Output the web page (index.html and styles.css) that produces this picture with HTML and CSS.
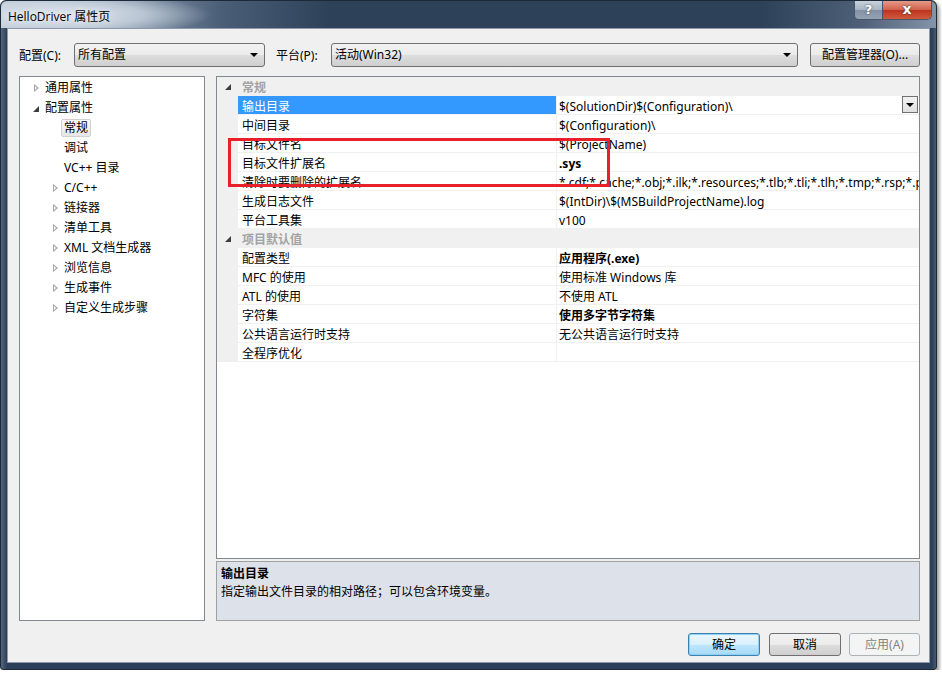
FILE: index.html
```html
<!DOCTYPE html>
<html lang="zh-CN">
<head>
    <meta charset="UTF-8">
    <title>HelloDriver 属性页</title>
    <link rel="stylesheet" href="styles.css">
</head>
<body>
    <div class="window">
        <!-- Barra de título -->
        <div class="titlebar">
            <span class="title">HelloDriver 属性页</span>
            <div class="caption-buttons">
                <div class="cap-btn help">?</div>
                <div class="cap-btn close">x</div>
            </div>
        </div>

        <div class="client">
            <!-- Configuración / plataforma -->
            <div class="toolbar">
                <label class="tb-label">配置(C):</label>
                <div class="combo combo-config">所有配置<span class="arrow"></span></div>
                <label class="tb-label">平台(P):</label>
                <div class="combo combo-platform">活动(Win32)<span class="arrow"></span></div>
                <div class="btn btn-manager">配置管理器(O)...</div>
            </div>

            <div class="main">
                <!-- Árbol de propiedades -->
                <ul class="tree">
                    <li class="lvl1"><span class="tw closed"></span>通用属性</li>
                    <li class="lvl1"><span class="tw open"></span>配置属性</li>
                    <li class="lvl2"><span class="tw none"></span><span class="sel">常规</span></li>
                    <li class="lvl2"><span class="tw none"></span>调试</li>
                    <li class="lvl2"><span class="tw none"></span>VC++ 目录</li>
                    <li class="lvl2"><span class="tw closed"></span>C/C++</li>
                    <li class="lvl2"><span class="tw closed"></span>链接器</li>
                    <li class="lvl2"><span class="tw closed"></span>清单工具</li>
                    <li class="lvl2"><span class="tw closed"></span>XML 文档生成器</li>
                    <li class="lvl2"><span class="tw closed"></span>浏览信息</li>
                    <li class="lvl2"><span class="tw closed"></span>生成事件</li>
                    <li class="lvl2"><span class="tw closed"></span>自定义生成步骤</li>
                </ul>

                <div class="right">
                    <!-- Rejilla de propiedades -->
                    <div class="grid">
                        <div class="cat"><span class="margin"><span class="tw open"></span></span><span class="cat-name">常规</span></div>
                        <div class="row selected"><span class="margin"></span><span class="name">输出目录</span><span class="value">$(SolutionDir)$(Configuration)\<span class="drop"><span class="arrow"></span></span></span></div>
                        <div class="row"><span class="margin"></span><span class="name">中间目录</span><span class="value">$(Configuration)\</span></div>
                        <div class="row"><span class="margin"></span><span class="name">目标文件名</span><span class="value">$(ProjectName)</span></div>
                        <div class="row"><span class="margin"></span><span class="name">目标文件扩展名</span><span class="value bold">.sys</span></div>
                        <div class="row"><span class="margin"></span><span class="name">清除时要删除的扩展名</span><span class="value">*.cdf;*.cache;*.obj;*.ilk;*.resources;*.tlb;*.tli;*.tlh;*.tmp;*.rsp;*.pgc</span></div>
                        <div class="row"><span class="margin"></span><span class="name">生成日志文件</span><span class="value">$(IntDir)\$(MSBuildProjectName).log</span></div>
                        <div class="row"><span class="margin"></span><span class="name">平台工具集</span><span class="value">v100</span></div>
                        <div class="cat"><span class="margin"><span class="tw open"></span></span><span class="cat-name">项目默认值</span></div>
                        <div class="row"><span class="margin"></span><span class="name">配置类型</span><span class="value bold">应用程序(.exe)</span></div>
                        <div class="row"><span class="margin"></span><span class="name">MFC 的使用</span><span class="value">使用标准 Windows 库</span></div>
                        <div class="row"><span class="margin"></span><span class="name">ATL 的使用</span><span class="value">不使用 ATL</span></div>
                        <div class="row"><span class="margin"></span><span class="name">字符集</span><span class="value bold">使用多字节字符集</span></div>
                        <div class="row"><span class="margin"></span><span class="name">公共语言运行时支持</span><span class="value">无公共语言运行时支持</span></div>
                        <div class="row"><span class="margin"></span><span class="name">全程序优化</span><span class="value"></span></div>

                        <!-- Marca roja de la captura -->
                        <div class="highlight"></div>
                    </div>

                    <!-- Descripción -->
                    <div class="desc">
                        <div class="desc-title">输出目录</div>
                        <div class="desc-text">指定输出文件目录的相对路径；可以包含环境变量。</div>
                    </div>
                </div>
            </div>

            <div class="footer">
                <div class="btn btn-ok">确定</div>
                <div class="btn btn-cancel">取消</div>
                <div class="btn btn-apply">应用(A)</div>
            </div>
        </div>
    </div>
</body>
</html>
```

FILE: styles.css
```css
body {
    margin: 0;
    background-color: #ffffff;
    font-family: "Noto Sans", "Noto Sans CJK SC", sans-serif;
    font-size: 12px;
    color: #000;
}

/* Ventana */
.window {
    width: 937px;
    height: 670px;
    display: flex;
    flex-direction: column;
    border-radius: 6px 6px 3px 3px;
    background: linear-gradient(to right, #55677e 0, #2c3f58 6px, #2c3f58 931px, #55677e 937px);
    box-shadow: 2px 3px 4px rgba(0, 0, 0, 0.45);
    box-sizing: border-box;
    border: 1px solid #1d2a3a;
}

.titlebar {
    height: 27px;
    display: flex;
    justify-content: space-between;
    align-items: flex-start;
    border-radius: 6px 6px 0 0;
    background:
        radial-gradient(ellipse 150px 22px at 60px 14px, rgba(225, 232, 240, 0.95) 0, rgba(210, 220, 230, 0.7) 55%, rgba(210, 220, 230, 0) 100%),
        linear-gradient(to right, #b9c5d2 0, #9aaabd 100px, #4a5e77 220px, #2d4159 330px, #2d4159 760px, #4d6078 860px, #8495aa 936px);
}

.title {
    padding: 6px 0 0 7px;
    font-family: "Open Sans", "Noto Sans CJK SC", sans-serif;
    font-size: 12px;
    color: #000;
    text-shadow: 0 0 6px #fff;
}

.caption-buttons {
    display: flex;
    margin-right: 4px;
    border: 1px solid #4a5668;
    border-top: none;
    border-radius: 0 0 5px 5px;
    overflow: hidden;
}

.cap-btn {
    height: 18px;
    font-family: "DejaVu Sans", sans-serif;
    font-weight: bold;
    color: #fff;
    text-align: center;
    line-height: 17px;
    text-shadow: 0 0 2px #333;
}

.help {
    width: 27px;
    font-size: 13px;
    border-right: 1px solid #4a5668;
    background: linear-gradient(to bottom, #c8d1dc 0, #a7b3c2 50%, #8291a4 51%, #94a3b4 100%);
}

.close {
    width: 48px;
    font-size: 14px;
    background: linear-gradient(to bottom, #e59a88 0, #d0604b 50%, #bd3320 51%, #cf5a3c 100%);
}

.client {
    flex: 1;
    min-width: 0;
    margin: 0 6px 6px 6px;
    background-color: #f0f0f0;
    border: 1px solid #8c9aab;
    padding: 14px 9px 6px 11px;
    display: flex;
    flex-direction: column;
}

/* Barra superior */
.toolbar {
    display: flex;
    align-items: center;
    height: 24px;
    margin-bottom: 9px;
}

.tb-label {
    width: 55px;
    flex-shrink: 0;
}

.combo {
    position: relative;
    flex-shrink: 0;
    height: 24px;
    box-sizing: border-box;
    border: 1px solid #707070;
    border-radius: 3px;
    padding-left: 3px;
    line-height: 22px;
    background: linear-gradient(to bottom, #f2f2f2 0, #ebebeb 50%, #dddddd 51%, #cfcfcf 100%);
    margin-right: 11px;
}

.combo-config {
    width: 191px;
}

.combo-platform {
    width: 467px;
    margin-right: 12px;
}

.arrow {
    position: absolute;
    right: 6px;
    top: 9px;
    width: 0;
    height: 0;
    border-left: 4px solid transparent;
    border-right: 4px solid transparent;
    border-top: 4px solid #000;
}

.btn {
    height: 24px;
    flex-shrink: 0;
    box-sizing: border-box;
    border: 1px solid #707070;
    border-radius: 3px;
    text-align: center;
    line-height: 22px;
    background: linear-gradient(to bottom, #f2f2f2 0, #ebebeb 50%, #dddddd 51%, #cfcfcf 100%);
}

.btn-manager {
    width: 110px;
}

/* Zona principal */
.main {
    display: flex;
    gap: 11px;
    height: 545px;
    min-width: 0;
}

.tree {
    width: 186px;
    flex-shrink: 0;
    box-sizing: border-box;
    margin: 0;
    padding: 0;
    list-style: none;
    background-color: #fff;
    border: 1px solid #828790;
    white-space: nowrap;
}

.tree li {
    height: 20px;
    box-sizing: border-box;
    padding-top: 2px;
    line-height: 18px;
    display: flex;
    align-items: center;
}

.tree .lvl1 {
    padding-left: 13px;
}

.tree .lvl2 {
    padding-left: 32px;
}

.tw {
    display: inline-block;
    flex-shrink: 0;
    width: 12px;
    height: 9px;
    box-sizing: border-box;
    position: relative;
}

.tw.closed::before {
    content: "";
    position: absolute;
    left: 1px;
    top: 0;
    border-top: 4.5px solid transparent;
    border-bottom: 4.5px solid transparent;
    border-left: 5px solid #a6a6a6;
}

.tw.closed::after {
    content: "";
    position: absolute;
    left: 2px;
    top: 2px;
    border-top: 2.5px solid transparent;
    border-bottom: 2.5px solid transparent;
    border-left: 2.8px solid #fff;
}

.tw.open::before {
    content: "";
    position: absolute;
    left: 0;
    top: 2px;
    border-left: 6px solid transparent;
    border-bottom: 6px solid #3d3d3d;
}

.tree .sel {
    margin-left: -3px;
    padding: 0 2px;
    height: 18px;
    box-sizing: border-box;
    line-height: 16px;
    border: 1px solid #d0d0d0;
    border-radius: 2px;
    background: linear-gradient(to bottom, #fafafa 0, #e6e6e6 100%);
}

.right {
    flex: 1;
    min-width: 0;
    display: flex;
    flex-direction: column;
    gap: 2px;
}

/* Rejilla */
.grid {
    position: relative;
    flex: 1;
    min-width: 0;
    background-color: #fff;
    border: 1px solid #828790;
    overflow: hidden;
}

.row, .cat {
    display: flex;
    height: 19px;
    line-height: 21px;
    white-space: nowrap;
}

.margin {
    width: 21px;
    flex-shrink: 0;
    background-color: #f0f0f0;
    position: relative;
}

.margin .tw {
    position: absolute;
    left: 8px;
    top: 5px;
}

.cat {
    background-color: #f0f0f0;
}

.cat-name {
    padding-left: 4px;
    color: #a3a3a3;
    font-weight: bold;
}

.name {
    width: 319px;
    flex-shrink: 0;
    padding-left: 4px;
    box-sizing: border-box;
    border-right: 1px solid #f0f0f0;
    border-bottom: 1px solid #f0f0f0;
}

.value {
    flex: 1;
    min-width: 0;
    padding-left: 2px;
    border-bottom: 1px solid #f0f0f0;
    overflow: hidden;
    position: relative;
}

.bold {
    font-weight: bold;
}

.row.selected .name {
    background-color: #3399ff;
    color: #fff;
}

.drop {
    position: absolute;
    right: 1px;
    top: 0;
    width: 16px;
    height: 17px;
    box-sizing: border-box;
    border: 1px solid #707070;
    background: linear-gradient(to bottom, #f2f2f2 0, #e0e0e0 100%);
}

.drop .arrow {
    right: 3px;
    top: 6px;
}

.highlight {
    position: absolute;
    left: 11px;
    top: 61px;
    width: 382px;
    height: 49px;
    box-sizing: border-box;
    border: 3px solid #e8202a;
}

/* Descripción */
.desc {
    height: 60px;
    box-sizing: border-box;
    border: 1px solid #a0a0a0;
    background-color: #dde1e9;
    padding: 3px 4px;
    line-height: 18px;
}

.desc-title {
    font-weight: bold;
}

/* Botones inferiores */
.footer {
    display: flex;
    justify-content: flex-end;
    margin-top: 12px;
}

.footer .btn {
    height: 23px;
    line-height: 21px;
    width: 72px;
}

.btn-ok {
    margin-right: 9px;
    border-color: #3c7fb1 !important;
    box-shadow: inset 0 0 0 1px #8fd1f2;
    background: linear-gradient(to bottom, #eaf6fd 0, #d9f0fc 50%, #bee6fd 51%, #a7d9f5 100%) !important;
}

.btn-cancel {
    margin-right: 8px;
}

.btn-apply {
    border-color: #adb2b5 !important;
    background: #f4f4f4 !important;
    color: #838383;
    width: 71px !important;
}
```
